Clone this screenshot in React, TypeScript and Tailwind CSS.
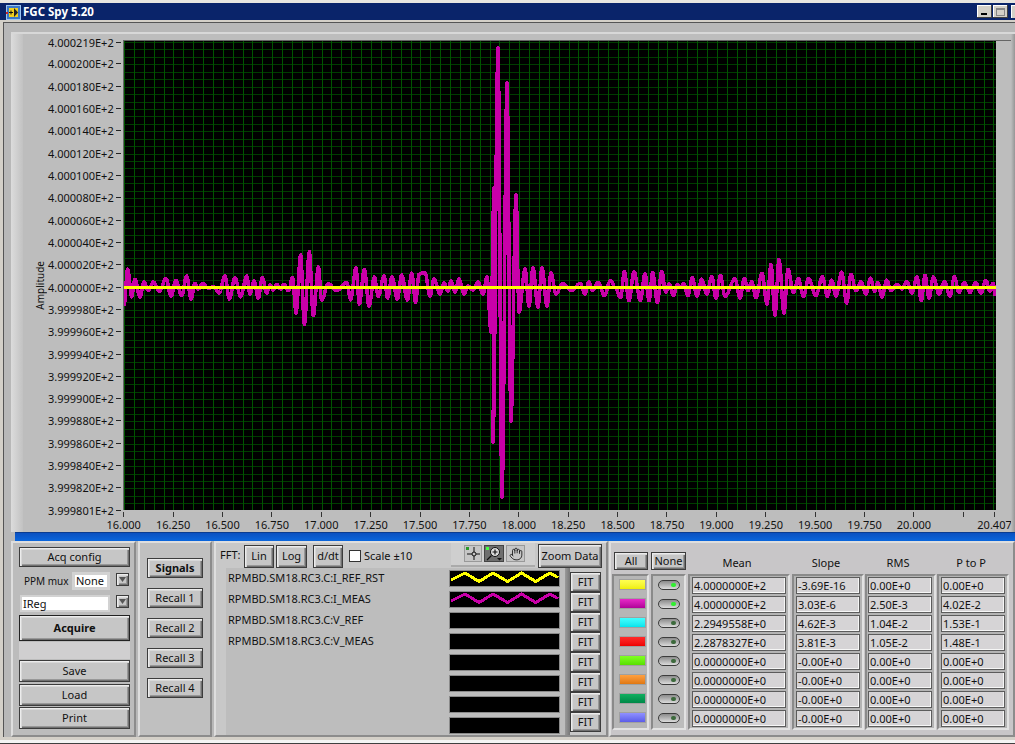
import { Hand } from "lucide-react";

const bevel =
  "border border-[#3c3c3c] bg-[#c6c6c6] whitespace-nowrap shadow-[inset_1px_1px_0_#ececec,inset_2px_2px_0_#d8d8d8,inset_-1px_-1px_0_#707070,inset_-2px_-2px_0_#989898]";
const panel = "border-2 border-t-[#dedede] border-l-[#dedede] border-r-[#8c8c8c] border-b-[#8c8c8c]";
const sunken = "border-2 border-t-[#8a8a8a] border-l-[#8a8a8a] border-r-[#e2e2e2] border-b-[#e2e2e2]";

const yLabels = [
  "4.000219E+2", "4.000200E+2", "4.000180E+2", "4.000160E+2", "4.000140E+2", "4.000120E+2", "4.000100E+2",
  "4.000080E+2", "4.000060E+2", "4.000040E+2", "4.000020E+2", "4.000000E+2", "3.999980E+2", "3.999960E+2",
  "3.999940E+2", "3.999920E+2", "3.999900E+2", "3.999880E+2", "3.999860E+2", "3.999840E+2", "3.999820E+2",
  "3.999801E+2",
];
const xLabels = [
  "16.000", "16.250", "16.500", "16.750", "17.000", "17.250", "17.500", "17.750", "18.000",
  "18.250", "18.500", "18.750", "19.000", "19.250", "19.500", "19.750", "20.000", "",
];

// trace turning points, read off the screen: [x0, x, y, x, y...] at 3x from y=240
const seg = (x0: number, flat: number[]) => {
  const out: number[][] = [];
  for (let i = 0; i < flat.length; i += 2) out.push([x0 + flat[i] / 3, 240 + flat[i + 1] / 3]);
  return out;
};
const turning = [
  ...seg(120, [
    12, 200, 23, 85, 35, 173, 45, 115, 60, 175, 72, 122, 85, 155, 100, 123, 118, 157, 138, 113, 153, 172, 168, 118,
    185, 170, 200, 105, 213, 180, 225, 127, 235, 150, 248, 127, 265, 148, 280, 137, 297, 162, 315, 105, 328, 180,
    345, 110, 362, 173, 380, 105, 390, 165, 402, 120, 415, 177, 427, 110, 440, 162, 450, 132, 460, 153, 470, 130,
    482, 150, 492, 130, 505, 155, 518, 110, 528, 222, 542, 42, 553, 256, 568, 32, 580, 230, 595, 78, 605, 183, 625,
    128, 650, 155, 680, 125, 692, 182, 708, 80, 718, 195, 733, 85, 747, 202, 763, 108, 775, 172, 792, 105, 803, 177,
    816, 108, 832, 180, 845, 102, 862, 183, 875, 97, 887, 190, 897, 100,
  ]),
  [425, 272], [430, 297], [434, 278], [440, 295], [444, 282], [448, 292], [451, 280], [455, 293], [459, 278],
  [464, 295], [468, 285], [473, 291], [478, 281], [483, 295], [487, 276], [491, 333], [494, 187], [493, 443],
  [498, 47], [502, 498], [507, 82], [511, 422], [516, 194], [519, 313], [525, 268], [529, 307], [533, 267],
  [538, 308], [542, 267], [547, 307], [551, 272], [556, 295],
  ...seg(560, [
    8, 128, 35, 155, 60, 127, 75, 165, 87, 122, 97, 155, 115, 124, 133, 170, 151, 119, 165, 140, 182, 176, 193, 92,
    207, 185, 222, 92, 241, 185, 255, 98, 267, 185, 278, 95, 292, 190, 305, 92, 318, 160, 327, 128, 340, 170, 352,
    131, 362, 145, 371, 128, 384, 170, 397, 110, 411, 172, 425, 115, 441, 165, 455, 107, 468, 178, 481, 103, 495,
    172, 525, 113, 540, 178, 553, 112, 564, 155, 575, 122, 588, 176, 606, 97, 621, 195, 633, 70, 645, 230, 657, 55,
  ]),
  ...seg(780, [
    12, 223, 24, 85, 40, 160, 55, 113, 70, 172, 86, 113, 108, 170, 127, 107, 142, 172, 155, 118, 168, 172, 185, 94,
    200, 192, 213, 100, 228, 155, 243, 122, 258, 165, 271, 112, 284, 157, 293, 125, 306, 175, 320, 118, 333, 155,
    352, 130, 366, 150, 380, 122, 396, 162, 411, 107, 424, 185, 435, 103, 447, 178, 460, 108, 477, 165, 493, 122,
    510, 172, 523, 107, 537, 160, 553, 125, 570, 160, 587, 125, 603, 163, 617, 118, 630, 157, 639, 127, 647, 172,
  ]),
];

function tracePoints() {
  const pts: string[] = [];
  for (let i = 0; i < turning.length - 1; i++) {
    const [x0, y0] = turning[i];
    const [x1, y1] = turning[i + 1];
    for (let s = 0; s < 8; s++) {
      const k = (1 - Math.cos((Math.PI * s) / 8)) / 2;
      const y = y0 + (y1 - y0) * k;
      const inset = y < 287.5 ? 1 : -1;
      pts.push(`${(x0 + ((x1 - x0) * s) / 8 - 124).toFixed(1)},${(y + inset * Math.abs(k - 0.5) * 2 - 41).toFixed(1)}`);
    }
  }
  return pts.join(" ");
}

function gridPath() {
  let v = "";
  let h = "";
  for (let i = 0; i * 9.88 < 872; i++) v += `M${Math.round(i * 9.88)} 0V469`;
  for (let i = -33; i < 30; i++) {
    const y = 246.5 + i * 7.44;
    if (y >= 0 && y <= 469) h += `M0 ${Math.round(y)}H872`;
  }
  return { v, h };
}

function Plot() {
  const { v, h } = gridPath();
  return (
    <div className="border-l border-t border-[#666]">
      <svg width={872} height={469} className="block bg-black" shapeRendering="crispEdges">
        <path d={h} stroke="#003c00" strokeWidth={1} />
        <path d={v} stroke="#005400" strokeWidth={1} />
        <polyline points={tracePoints()} fill="none" stroke="#c800a8" strokeWidth={3.5} strokeLinejoin="round" />
        <rect x={0} y={245} width={872} height={3} fill="#ffff00" />
      </svg>
    </div>
  );
}

function YAxis() {
  return (
    <div className="w-[100px] flex-none flex">
      <div className="w-[25px] flex-none flex justify-end items-center h-[490px] pr-[2px]">
        <span className="[writing-mode:vertical-rl] rotate-180 leading-[11px] text-[10px]">Amplitude</span>
      </div>
      <div className="flex-1 flex flex-col -mt-[4px]">
        {yLabels.map((l, i) => (
          <div
            key={l}
            className={i === 0 ? "h-[12px] mb-[4.84px] flex items-center" : "h-[22.32px] flex items-center"}
          >
            <span className="leading-none">{l}</span>
            <span className="ml-[2px] w-[5px] h-px bg-[#222]" />
          </div>
        ))}
      </div>
    </div>
  );
}

function XAxis() {
  return (
    <div className="flex -ml-[24px] mt-[2px]">
      {xLabels.map((l, i) => (
        <div key={i} className="w-[49.4px] flex-none flex flex-col items-center">
          <span className="w-px h-[5px] bg-[#333]" />
          <span className="mt-[1px] leading-[14px] h-[14px]">{l}</span>
        </div>
      ))}
      <div className="w-[33px] flex-none -ml-[10px] flex flex-col items-center">
        <span className="w-px h-[5px] bg-[#333]" />
        <span className="mt-[1px] leading-[14px]">20.407</span>
      </div>
    </div>
  );
}

function Dropdown() {
  return (
    <div className={`${bevel} w-[13px] h-[13px] flex-none flex items-center justify-center`}>
      <svg width="7" height="5" viewBox="0 0 7 5">
        <path d="M0 0H7L3.5 5Z" fill="#555" />
      </svg>
    </div>
  );
}

function AcqPanel() {
  return (
    <div className={`${panel} w-[125px] flex-none pt-[4px] pl-[6px] bg-[#bcbcbc]`}>
      <div className={`${bevel} w-[111px] h-[20px] flex items-center justify-center`}>Acq config</div>
      <div className="flex items-start mt-[5px] h-[18px]">
        <span className="w-[53px] pl-[5px] leading-[18px] flex-none whitespace-nowrap text-[10px]">PPM mux</span>
        <div className="w-[38px] h-[18px] border-[3px] border-[#d2d2d2] bg-white leading-[12px] pl-[1px]">None</div>
        <div className="ml-[6px] mt-[1px]">
          <Dropdown />
        </div>
      </div>
      <div className="flex items-start mt-[5px] h-[17px]">
        <div className="ml-[1px] w-[90px] h-[17px] border-2 border-[#d2d2d2] bg-white leading-[13px] pl-[1px]">IReg</div>
        <div className="ml-[6px]">
          <Dropdown />
        </div>
      </div>
      <div className={`${bevel} mt-[3px] w-[111px] h-[26px] flex items-center justify-center font-bold border-[#222]`}>
        Acquire
      </div>
      <div className="mt-[1px] w-[111px] h-[17px] bg-[#d0cfd0]" />
      <div className={`${bevel} mt-[1px] w-[111px] h-[22px] flex items-center justify-center`}>Save</div>
      <div className={`${bevel} mt-[2px] w-[111px] h-[22px] flex items-center justify-center`}>Load</div>
      <div className={`${bevel} mt-[1px] w-[111px] h-[22px] flex items-center justify-center`}>Print</div>
    </div>
  );
}

function RecallPanel() {
  return (
    <div className={`${panel} ml-[2px] w-[74px] flex-none pt-[15px] pl-[7px] flex flex-col gap-[10px] bg-[#c0c0c0]`}>
      {["Signals", "Recall 1", "Recall 2", "Recall 3", "Recall 4"].map((l) => (
        <div
          key={l}
          className={
            l === "Signals"
              ? `${bevel} w-[56px] h-[20px] flex items-center justify-center font-bold`
              : `${bevel} w-[56px] h-[20px] flex items-center justify-center`
          }
        >
          {l}
        </div>
      ))}
    </div>
  );
}

function Zigzag({ color }: { color: string }) {
  return (
    <svg width="109" height="15" viewBox="1 1 109 15" className="block" shapeRendering="crispEdges">
      <polyline
        points="2,10 16,3 30,11.5 44,3 58.6,11.5 72.5,3 86.6,11.5 101,3 109,7.5"
        fill="none"
        stroke={color}
        strokeWidth={3}
      />
    </svg>
  );
}

function ToolButtons() {
  return (
    <div className="ml-[37px] w-[84px] h-[24px] flex-none flex items-start gap-[2px] pl-[13px] pt-[2px] bg-[#cfcfcf] border-b-2 border-[#aaa]">
      <div className="w-[18px] h-[17px] bg-[#c6c6c6] border border-[#999] flex items-center justify-center">
        <svg width="16" height="15" viewBox="0 0 16 15">
          <rect x="1" y="1" width="3" height="3" fill="#2a9a2a" />
          <path d="M9 1V14M2 8H15" stroke="#111" strokeWidth="1" fill="none" />
          <circle cx="9" cy="8" r="2" fill="#c6c6c6" stroke="#111" strokeWidth="1" />
        </svg>
      </div>
      <div className="w-[20px] h-[17px] bg-[#6e6e6e] border border-[#444] flex items-center justify-center">
        <svg width="18" height="15" viewBox="0 0 18 15">
          <rect x="1" y="1" width="3" height="3" fill="#44ff44" />
          <circle cx="10" cy="6" r="4.5" fill="#ddd" stroke="#111" strokeWidth="1" />
          <path d="M7.5 6H12.5M10 3.5V8.5M6.5 9.5L2 14" stroke="#111" strokeWidth="1.2" fill="none" />
          <path d="M12 12H17L14.5 14.5Z" fill="#111" />
        </svg>
      </div>
      <div className="w-[19px] h-[17px] bg-[#c6c6c6] border border-[#999] flex items-center justify-center">
        <Hand size={14} strokeWidth={1.4} color="#111" />
      </div>
    </div>
  );
}

const signals = ["RPMBD.SM18.RC3.C:I_REF_RST", "RPMBD.SM18.RC3.C:I_MEAS", "RPMBD.SM18.RC3.C:V_REF", "RPMBD.SM18.RC3.C:V_MEAS", "", "", "", ""];

function SignalPanel() {
  return (
    <div className={`${panel} ml-[2px] w-[394px] flex-none flex flex-col bg-[#c8c8c8]`}>
      <div className="h-[25px] flex items-start flex-none">
        <span className="ml-[4px] w-[24px] flex-none leading-[24px] whitespace-nowrap">FFT:</span>
        <div className={`${bevel} mt-[2px] w-[30px] flex-none h-[23px] flex items-center justify-center`}>Lin</div>
        <div className={`${bevel} mt-[2px] ml-[2px] w-[31px] flex-none h-[23px] flex items-center justify-center`}>Log</div>
        <div className={`${bevel} mt-[2px] ml-[6px] w-[30px] flex-none h-[23px] flex items-center justify-center`}>d/dt</div>
        <div className="mt-[7px] ml-[6px] w-[12px] flex-none h-[12px] bg-white border border-[#333]" />
        <span className="ml-[3px] w-[50px] flex-none leading-[26px] whitespace-nowrap">Scale ±10</span>
        <ToolButtons />
        <div className={`${bevel} mt-[1px] ml-[3px] w-[64px] flex-none h-[24px] flex items-center justify-center`}>Zoom Data</div>
      </div>
      <div className="flex flex-1 min-h-0">
        <div className="w-[10px] flex-none" />
        <div className="w-[339px] flex-none bg-[#bdbdbd] pt-[2px]">
          {signals.map((s, i) => (
            <div key={i} className="h-[21px] flex items-start">
              <span className="w-[223px] flex-none pl-[2px] leading-[15px]">{s}</span>
              <div className="w-[111px] h-[17px] bg-black border border-[#8a8a8a]">
                {i === 0 && <Zigzag color="#ffff00" />}
                {i === 1 && <Zigzag color="#c800a8" />}
              </div>
            </div>
          ))}
        </div>
        <div className="w-[5px] flex-none bg-linear-to-r from-[#9a9a9a] to-[#777]" />
        <div className="pt-[4px]">
          {signals.map((_, i) => (
            <div key={i} className={`${bevel} w-[31px] h-[20px] flex items-center justify-center`}>
              FIT
            </div>
          ))}
        </div>
      </div>
    </div>
  );
}

const swatches = [
  "bg-linear-to-b from-[#ffff50] to-[#eeee00]",
  "bg-linear-to-b from-[#e828c8] to-[#b00098]",
  "bg-linear-to-b from-[#40ffff] to-[#00e4ec]",
  "bg-linear-to-b from-[#ff2828] to-[#ee0000]",
  "bg-linear-to-b from-[#80ff20] to-[#58e000]",
  "bg-linear-to-b from-[#ffa040] to-[#e07810]",
  "bg-linear-to-b from-[#10b060] to-[#008848]",
  "bg-linear-to-b from-[#9090ff] to-[#5c5ce8]",
];

const stats = [
  { name: "Mean", outer: "w-[102px] ml-[2px] pl-[2px]", cell: "w-[94px]", vals: ["4.0000000E+2", "4.0000000E+2", "2.2949558E+0", "2.2878327E+0", "0.0000000E+0", "0.0000000E+0", "0.0000000E+0", "0.0000000E+0"] },
  { name: "Slope", outer: "w-[72px] ml-[2px] pl-[2px]", cell: "w-[64px]", vals: ["-3.69E-16", "3.03E-6", "4.62E-3", "3.81E-3", "-0.00E+0", "-0.00E+0", "-0.00E+0", "-0.00E+0"] },
  { name: "RMS", outer: "w-[71px] ml-[1px] pl-[1px]", cell: "w-[64px]", vals: ["0.00E+0", "2.50E-3", "1.04E-2", "1.05E-2", "0.00E+0", "0.00E+0", "0.00E+0", "0.00E+0"] },
  { name: "P to P", outer: "w-[72px] ml-[1px] pl-[2px]", cell: "w-[64px]", vals: ["0.00E+0", "4.02E-2", "1.53E-1", "1.48E-1", "0.00E+0", "0.00E+0", "0.00E+0", "0.00E+0"] },
];

function StatsPanel() {
  return (
    <div className={`${panel} ml-[1px] flex-1 pt-[9px] pl-[1px] bg-[#c8c6c8]`}>
      <div className="flex h-[18px]">
        <div className={`${bevel} ml-[2px] w-[34px] h-[18px] flex items-center justify-center`}>All</div>
        <div className={`${bevel} ml-[3px] w-[35px] h-[18px] flex items-center justify-center`}>None</div>
        {stats.map((c) => (
          <div key={c.name} className={`${c.outer} pr-[6px] flex-none text-center pt-[4px] leading-[14px]`}>
            {c.name}
          </div>
        ))}
      </div>
      <div className="flex mt-[4px] h-[156px]">
        <div className={`${sunken} w-[37px] flex-none bg-[#b6b6b6]`}>
          {swatches.map((s) => (
            <div key={s} className="h-[19px] pt-[4px] pl-[6px]">
              <div className={`${s} w-[25px] h-[9px] shadow-[0_0_0_1px_#a0a0a0]`} />
            </div>
          ))}
        </div>
        <div className={`${sunken} ml-[2px] w-[35px] flex-none bg-[#bcbcbc]`}>
          {swatches.map((s, i) => (
            <div key={s} className="h-[19px] pt-[4px] pl-[5px]">
              <div className="w-[22px] h-[10px] rounded-full border border-[#3c3c3c] bg-linear-to-b from-[#8c8c8c] to-[#dcdcdc] flex items-center justify-end pr-[3px]">
                <span className={i < 2 ? "w-[5px] h-[4px] rounded-full bg-[#30f030]" : "w-[5px] h-[4px] rounded-full bg-[#3c6a3c]"} />
              </div>
            </div>
          ))}
        </div>
        {stats.map((c) => (
          <div key={c.name} className={`${sunken} ${c.outer} flex-none bg-[#b4b4b4] pt-[1px] flex flex-col gap-[2px]`}>
            {c.vals.map((v, i) => (
              <div
                key={i}
                className={`${c.cell} h-[17px] border border-[#5c5c5c] bg-[#d6d4d6] shadow-[inset_-1px_-1px_0_#f6f6f6] leading-[15px] pl-[1px]`}
              >
                {v}
              </div>
            ))}
          </div>
        ))}
      </div>
    </div>
  );
}

export default function App() {
  return (
    <div className="w-[1015px] h-[744px] overflow-hidden bg-[#d4d0c8] text-[#111] text-[11px] font-['Noto_Sans',sans-serif]">
      {/* Title bar */}
      <div className="h-[22px] border-t-[3px] border-b-2 border-t-[#e8e6e0] border-b-[#d4d0c8] bg-[#0a246a] flex items-center">
        <svg width="15" height="15" viewBox="0 0 15 15" className="ml-[6px] mt-[1px] flex-none">
          <rect x="0.5" y="0.5" width="14" height="14" fill="#3a78c8" stroke="#9cc4f0" />
          <rect x="3" y="3" width="9" height="9" fill="#f0d020" />
          <path d="M3 7.5H7M5 5.5V9.5" stroke="#111" />
          <path d="M8 3L12 7.5L8 12Z" fill="#222" />
          <rect x="0" y="7" width="2" height="2" fill="#d02020" />
        </svg>
        <span className="ml-[2px] text-white font-bold text-[11.5px] leading-none">FGC Spy 5.20</span>
        <div className="flex-1" />
        <div className="w-[15px] h-[13px] bg-[#d4d0c8] shadow-[inset_-1px_-1px_0_#404040,inset_1px_1px_0_#fff] flex items-end pl-[4px] pb-[3px]">
          <span className="w-[6px] h-[2px] bg-black" />
        </div>
        <div className="ml-[1px] w-[15px] h-[13px] bg-[#d4d0c8] shadow-[inset_-1px_-1px_0_#404040,inset_1px_1px_0_#fff] flex items-center justify-center">
          <span className="w-[9px] h-[8px] border border-[#888] border-t-2" />
        </div>
        <div className="ml-[3px] w-[4px] h-[13px] bg-[#d4d0c8] shadow-[inset_1px_1px_0_#fff]" />
      </div>

      {/* Client area */}
      <div className="ml-[3px] h-[715px] border-l border-t border-[#555] bg-[#b8b8b8] flex flex-col">
        {/* Graph */}
        <div className="h-[509px] flex-none flex flex-col">
          <div className="h-[9px] flex-none" />
          <div className="ml-[7px] flex-1 min-h-0 flex border-t-2 border-[#d8d8d8] bg-[#bdbdbd]">
            <div className="w-[12px] flex-none bg-linear-to-r from-[#dcdcdc] to-[#c2c2c2]" />
            <div className="pt-[6px] flex flex-none">
              <YAxis />
              <div>
                <Plot />
                <XAxis />
              </div>
            </div>
            <div className="flex-1" />
            <div className="w-[5px] flex-none bg-linear-to-r from-[#bdbdbd] to-[#8c8c8c]" />
          </div>
        </div>
        {/* Splitter */}
        <div className="h-[9px] flex-none ml-[11px] border-t border-[#0a3c90] bg-linear-to-b from-[#0a50c0] to-[#0a66dc]" />
        {/* Controls */}
        <div className="h-[196px] flex-none ml-[7px] flex">
          <AcqPanel />
          <RecallPanel />
          <SignalPanel />
          <StatsPanel />
        </div>
      </div>

      {/* Bottom window edge */}
      <div className="h-[7px] border-t-[3px] border-b border-t-[#d4d0c8] border-b-[#404040] bg-[#f4f4f4]" />
    </div>
  );
}
